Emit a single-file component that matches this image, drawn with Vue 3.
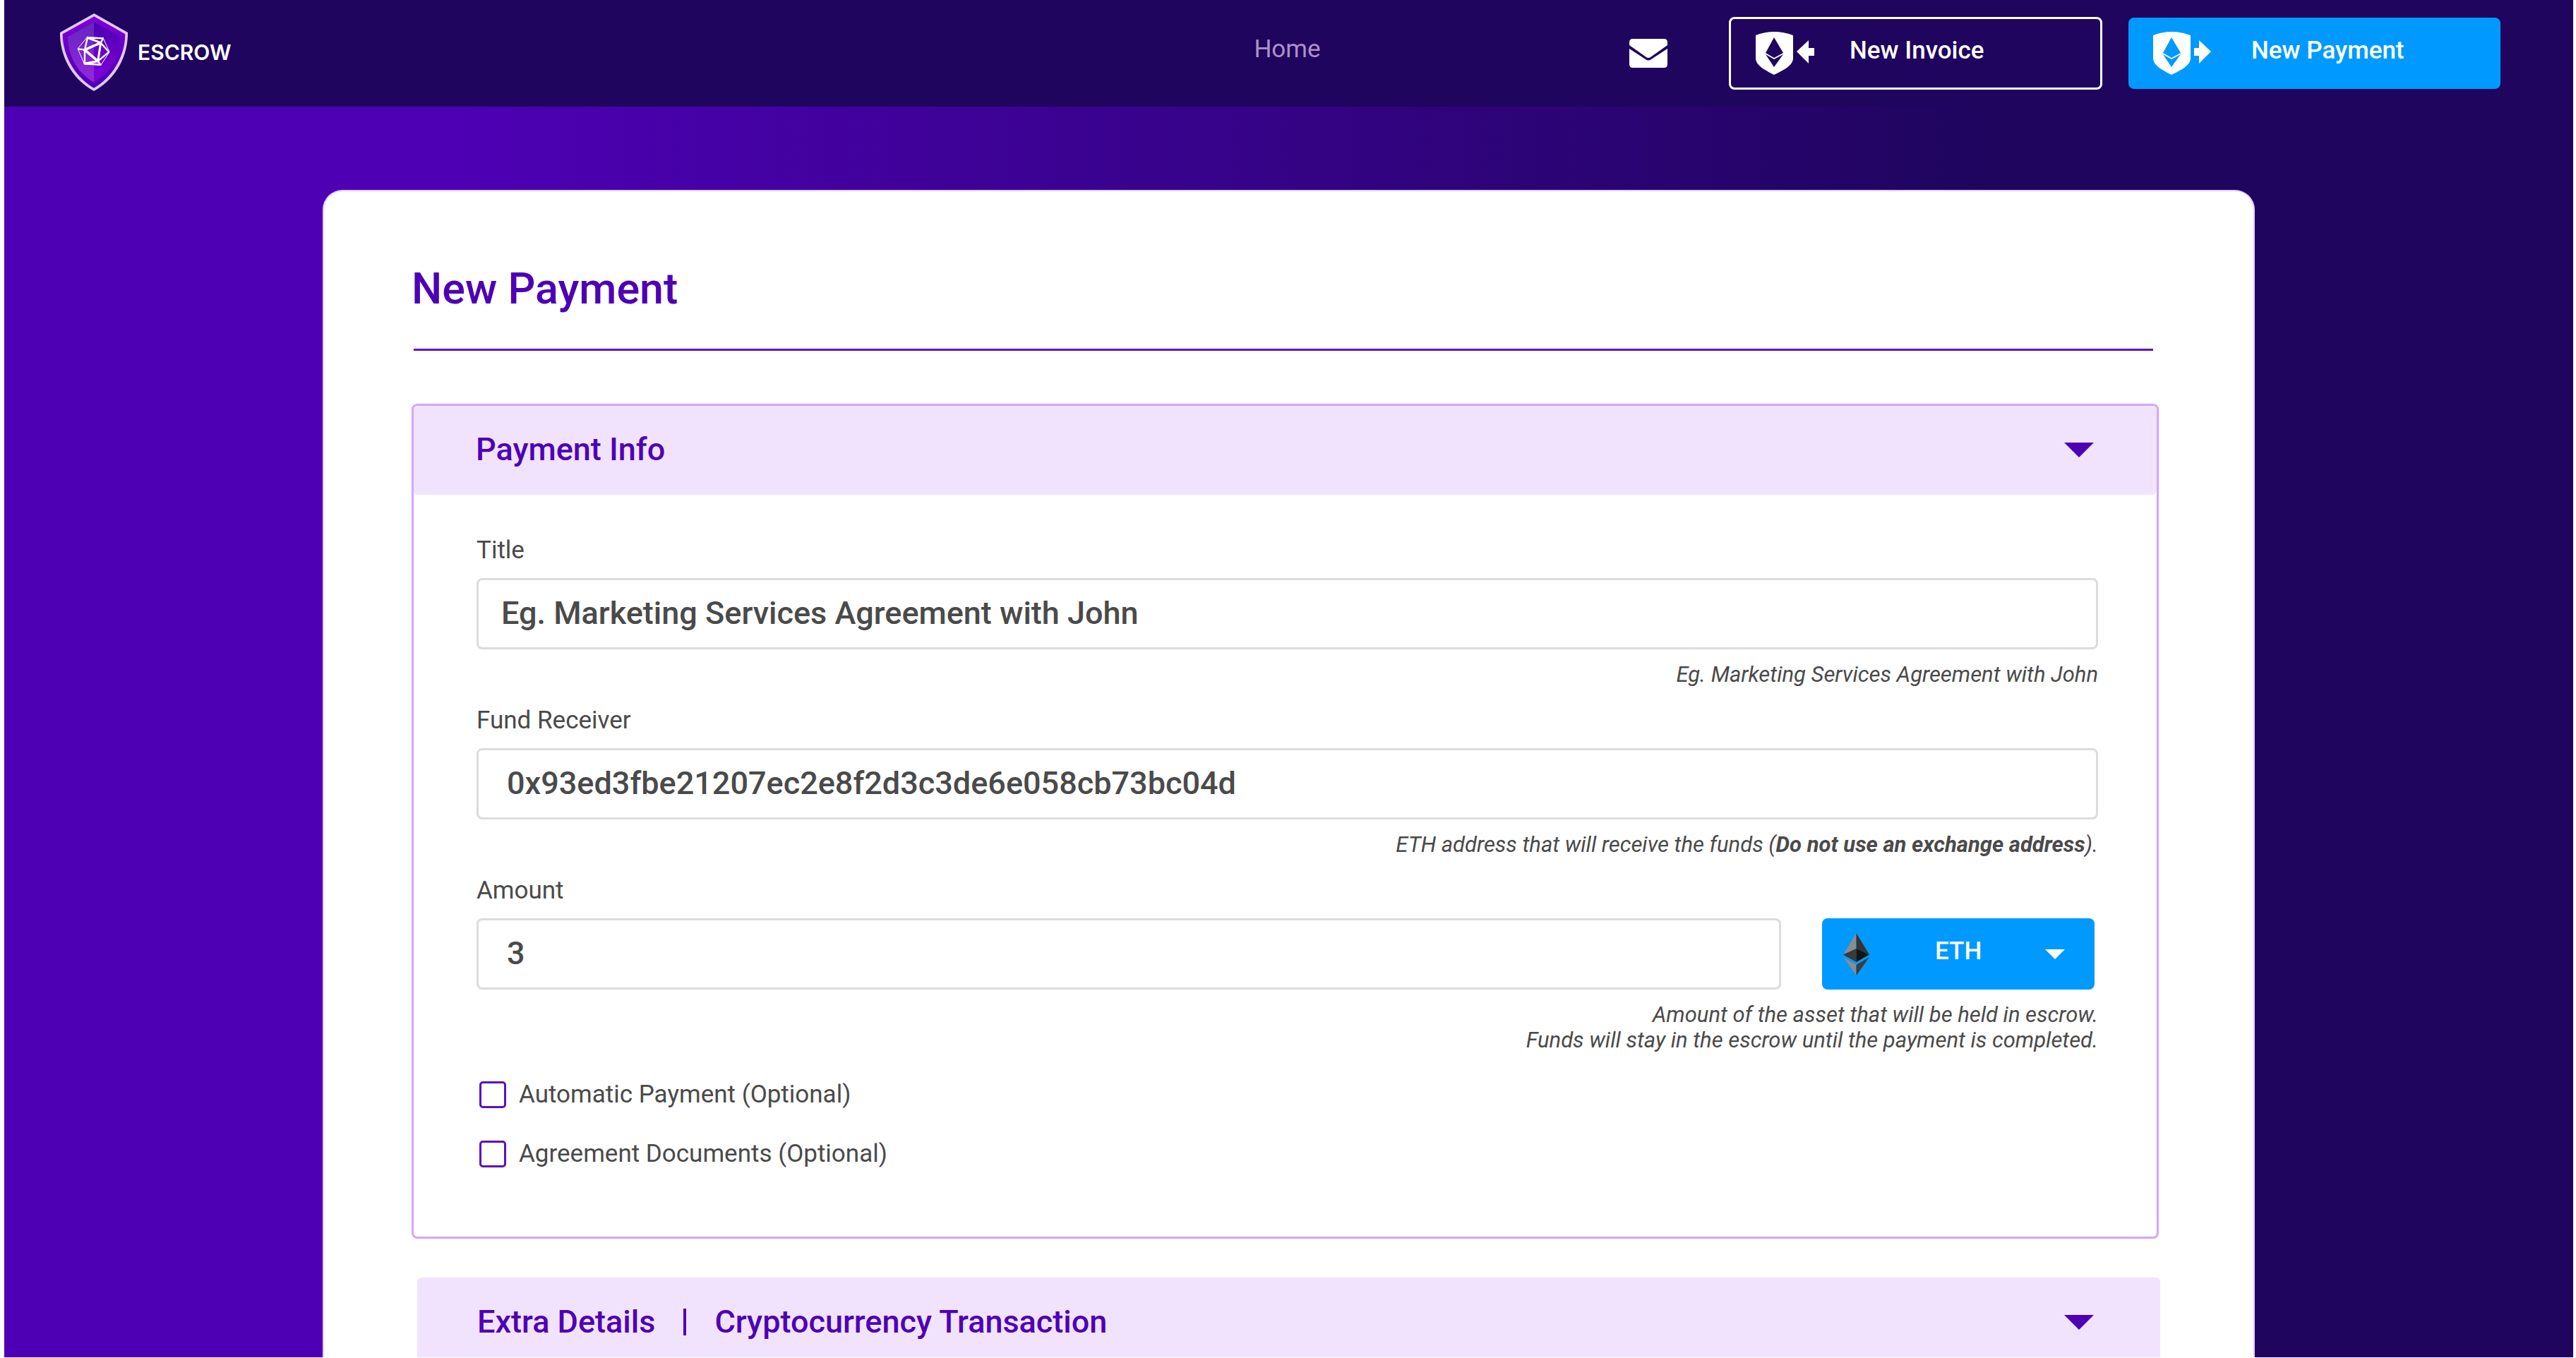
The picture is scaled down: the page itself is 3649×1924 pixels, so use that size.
<script setup>
import { ref } from 'vue'

const title = ref('Eg. Marketing Services Agreement with John')
const receiver = ref('0x93ed3fbe21207ec2e8f2d3c3de6e058cb73bc04d')
const amount = ref('3')
const asset = ref('ETH')
const options = ref([
  { id: 'automatic', label: 'Automatic Payment (Optional)', checked: false },
  { id: 'documents', label: 'Agreement Documents (Optional)', checked: false },
])
</script>

<template>
  <div class="page">
    <header class="topbar">
      <a class="brand" href="#">
        <svg class="brand-mark" viewBox="255 57 288 330" aria-hidden="true">
          <defs>
            <linearGradient id="rim" x1="0" y1="0" x2="0" y2="1">
              <stop offset="0" stop-color="#8000d8" />
              <stop offset="1" stop-color="#4a00b0" />
            </linearGradient>
            <linearGradient id="core" x1="0" y1="0" x2="0" y2="1">
              <stop offset="0" stop-color="#4c00b2" />
              <stop offset="1" stop-color="#8200da" />
            </linearGradient>
          </defs>
          <path fill="#e3c8fb" d="M400 57L543 138C545 250 480 345 399 387C318 345 253 250 255 138Z" />
          <path fill="url(#rim)" d="M400 70L532 145C532 245 470 335 399 374C328 335 266 245 266 145Z" />
          <path fill="url(#core)" d="M399 94L511 157C510 240 470 310 399 350C328 310 290 240 288 157Z" />
          <path fill="#fff" fill-opacity=".15" d="M399 94V350C328 310 290 240 288 157Z" />
          <g fill="none" stroke="#fff" stroke-linejoin="round" stroke-linecap="round">
            <path stroke-width="3" d="M372 158L438 161L465 221L428 277L359 273L331 208Z" />
            <path stroke-width="11" d="M428 182L360 212L416 260" />
            <path stroke-width="9" d="M428 182L416 260M372 160L428 182M360 270L416 260" />
            <path stroke-width="7" d="M372 160L438 163M360 270L428 275M372 160L360 212L360 270M438 163L428 182L463 221L416 260L428 275M360 212L333 208" />
          </g>
        </svg>
        <span class="brand-name">ESCROW</span>
      </a>

      <nav class="nav">
        <a class="nav-link" href="#">Home</a>
      </nav>

      <div class="actions">
        <button class="mail" type="button" aria-label="Messages">
          <svg width="54" height="41" viewBox="0 0 54 41" fill="#fff" aria-hidden="true">
            <path d="M5 0H49Q54 0 54 5V9L30 26Q27 28 24 26L0 9V5Q0 0 5 0Z" />
            <path d="M0 14L23 29Q27 32 31 29L54 14V36Q54 41 49 41H5Q0 41 0 36Z" />
          </svg>
        </button>
        <button class="action outline" type="button">
          <svg width="83" height="61" viewBox="0 0 83 61" fill="#fff" aria-hidden="true">
            <path fill-rule="evenodd" d="M0 5Q26 -5 53 5V37C53 48 40 54 26 61C13 54 0 48 0 37ZM26 8L14 30L26 37L39 30ZM14 32L26 50L39 32L26 39Z" />
            <path d="M58 28L75 12V23H83V34H75V45Z" />
          </svg>
          <span>New Invoice</span>
        </button>
        <button class="action solid" type="button">
          <svg width="83" height="61" viewBox="0 0 83 61" fill="#fff" aria-hidden="true">
            <path fill-rule="evenodd" d="M0 5Q26 -5 53 5V37C53 48 40 54 26 61C13 54 0 48 0 37ZM26 8L14 30L26 37L39 30ZM14 32L26 50L39 32L26 39Z" />
            <path d="M82 28L65 12V23H58V34H65V45Z" />
          </svg>
          <span>New Payment</span>
        </button>
      </div>
    </header>

    <main class="backdrop">
      <form class="card" @submit.prevent>
        <h1>New Payment</h1>
        <hr class="rule" />

        <section class="panel">
          <button class="panel-head" type="button" aria-expanded="true">
            <span>Payment Info</span>
            <svg width="42" height="21" viewBox="0 0 42 21" aria-hidden="true"><path fill="#4e00b5" d="M0 0H42L21 21Z" /></svg>
          </button>

          <div class="panel-body">
            <div class="field">
              <label for="title">Title</label>
              <input id="title" v-model="title" class="control title-control" type="text" />
              <p class="hint">Eg. Marketing Services Agreement with John</p>
            </div>

            <div class="field">
              <label for="receiver">Fund Receiver</label>
              <input id="receiver" v-model="receiver" class="control" type="text" spellcheck="false" />
              <p class="hint">ETH address that will receive the funds (<strong>Do not use an exchange address</strong>).</p>
            </div>

            <div class="field">
              <label for="amount">Amount</label>
              <div class="amount-row">
                <input id="amount" v-model="amount" class="control" type="text" inputmode="decimal" />
                <div class="asset">
                  <svg class="asset-logo" width="37" height="60" viewBox="0 0 74 120" aria-hidden="true">
                    <path fill="#8c8c8c" d="M37 0V44L0 61Z" />
                    <path fill="#343434" d="M37 0V44L74 61Z" />
                    <path fill="#393939" d="M37 44V82L0 61Z" />
                    <path fill="#141414" d="M37 44V82L74 61Z" />
                    <path fill="#8c8c8c" d="M0 68L37 90V120Z" />
                    <path fill="#3c3c3b" d="M74 68L37 90V120Z" />
                  </svg>
                  <select v-model="asset" class="asset-select" aria-label="Asset">
                    <option>ETH</option>
                  </select>
                  <svg class="asset-caret" width="28" height="14" viewBox="0 0 28 14" aria-hidden="true"><path fill="#fff" d="M0 0H28L14 14Z" /></svg>
                </div>
              </div>
              <p class="hint">Amount of the asset that will be held in escrow.<br />Funds will stay in the escrow until the payment is completed.</p>
            </div>

            <div class="options">
              <label v-for="option in options" :key="option.id" class="option">
                <input v-model="option.checked" type="checkbox" />
                <span>{{ option.label }}</span>
              </label>
            </div>
          </div>
        </section>

        <section class="extra">
          <button class="panel-head extra-head" type="button" aria-expanded="false">
            <span class="extra-title">
              <span>Extra Details</span>
              <span class="divider"></span>
              <span>Cryptocurrency Transaction</span>
            </span>
            <svg width="42" height="21" viewBox="0 0 42 21" aria-hidden="true"><path fill="#4e00b5" d="M0 0H42L21 21Z" /></svg>
          </button>
        </section>
      </form>
    </main>
  </div>
</template>

<style>
body {
  margin: 0;
  background: #fff;
}
</style>

<style scoped>
.page {
  padding: 0 4px 1px 6px;
  font-family: Roboto, "Liberation Sans", sans-serif;
  color: #4a4a4a;
}

.page *,
.page *::before {
  box-sizing: border-box;
}

button,
input,
select {
  margin: 0;
  font-family: inherit;
}

button {
  cursor: pointer;
}

svg {
  display: block;
  flex: none;
}

.topbar {
  display: grid;
  grid-template-columns: 1fr auto 1fr;
  align-items: center;
  height: 151px;
  padding: 0 103px 0 79px;
  background: #1f055e;
}

.brand {
  display: flex;
  align-items: center;
  gap: 14px;
  padding-bottom: 3px;
  color: #fff;
  text-decoration: none;
}

.brand-mark {
  width: 96px;
  height: 110px;
}

.brand-name {
  font: 600 30px/36px Inter, Roboto, sans-serif;
}

.nav {
  padding: 0 0 12px 20px;
}

.nav-link {
  font-size: 35px;
  line-height: 42px;
  color: #ad91c9;
  text-decoration: none;
}

.actions {
  display: flex;
  align-items: center;
  justify-content: flex-end;
  gap: 37px;
}

.mail {
  margin-right: 50px;
  padding: 0;
  border: 0;
  background: none;
}

.action {
  display: flex;
  align-items: center;
  border-radius: 8px;
  color: #fff;
  font-size: 35px;
  font-weight: 500;
  line-height: 42px;
}

.action span {
  padding-bottom: 8px;
}

.outline {
  gap: 50px;
  width: 529px;
  height: 103px;
  padding: 0 35px;
  border: 3px solid #fff;
  background: none;
}

.solid {
  gap: 56px;
  width: 527px;
  height: 101px;
  padding: 0 35px;
  border: 0;
  background: #0099ff;
}

.backdrop {
  padding: 118px 24px 0;
  background: linear-gradient(90deg, #4e00b5 17%, #1f055e 77%);
}

.card {
  max-width: 2737px;
  margin: 0 auto;
  padding: 102px 134px 0 124px;
  border: 2px solid #e3cdf7;
  border-bottom: 0;
  border-radius: 28px 28px 0 0;
  background: #fff;
}

h1 {
  margin: 0;
  color: #4e00b5;
  font-size: 61px;
  font-weight: 500;
  line-height: 72px;
}

.rule {
  height: 3px;
  margin: 49px 8px 75px 3px;
  border: 0;
  background: #5c14bc;
}

.panel {
  border: 3px solid #d3a5ff;
  border-radius: 8px;
}

.panel-head {
  display: flex;
  align-items: center;
  justify-content: space-between;
  width: 100%;
  padding: 35px 89px 37px 88px;
  border: 0;
  border-radius: 6px;
  background: #f1e3fd;
  color: #4e00b5;
  font-size: 45px;
  font-weight: 500;
  line-height: 54px;
  text-align: left;
}

.panel-body {
  display: flex;
  flex-direction: column;
  gap: 26px;
  padding: 58px 83px 96px 89px;
}

.field {
  display: flex;
  flex-direction: column;
  gap: 18px;
}

.field label {
  font-size: 35px;
  line-height: 42px;
}

.control {
  width: 100%;
  height: 101px;
  padding: 0 40px 2px;
  border: 3px solid #dcdcdc;
  border-radius: 8px;
  background: #fff;
  color: #4a4a4a;
  font-size: 45px;
  font-weight: 500;
}

.title-control {
  padding: 0 32px 2px;
}

.hint {
  margin: 0;
  font-size: 31px;
  font-style: italic;
  line-height: 36px;
  text-align: right;
}

.amount-row {
  display: flex;
  gap: 58px;
  padding-right: 5px;
}

.amount-row .control {
  flex: 1;
}

.asset {
  position: relative;
  width: 386px;
}

.asset-select {
  appearance: none;
  width: 100%;
  height: 101px;
  padding: 0 80px 8px 160px;
  border: 0;
  border-radius: 8px;
  background: #0099ff;
  color: #fff;
  font-size: 35px;
  font-weight: 500;
}

.asset-logo,
.asset-caret {
  position: absolute;
  pointer-events: none;
}

.asset-logo {
  top: 21px;
  left: 30px;
}

.asset-caret {
  top: 44px;
  right: 42px;
}

.options {
  display: flex;
  flex-direction: column;
  gap: 42px;
  padding: 12px 0 0 4px;
}

.option {
  display: flex;
  align-items: center;
  gap: 18px;
  font-size: 35px;
  line-height: 42px;
}

.option input {
  appearance: none;
  width: 38px;
  height: 38px;
  border: 3px solid #5a12bb;
  border-radius: 5px;
  background: #fff;
}

.option input:checked {
  background: #4e00b5;
}

.extra {
  margin: 55px -2px 0 8px;
}

.extra-head {
  padding: 36px 94px 23px 85px;
  border-radius: 6px 6px 0 0;
}

.extra-title {
  display: flex;
  align-items: center;
  gap: 40px;
}

.divider {
  width: 4px;
  height: 38px;
  background: #4e00b5;
}
</style>
